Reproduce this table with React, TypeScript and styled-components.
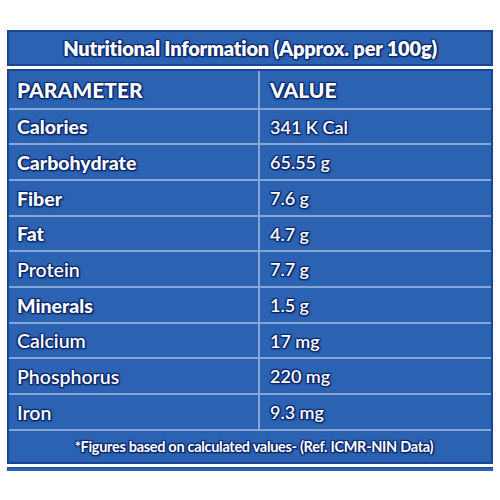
import React from "react";
import styled, { createGlobalStyle } from "styled-components";

const Global = createGlobalStyle`
  html, body { margin: 0; padding: 0; background: #ffffff; }
  body { width: 500px; height: 500px; overflow: hidden; }
`;

const BLUE = "#2b62b1";
const DARK = "#1a4597";
const LINE = "#86a6d6";
const SHADOW =
  "1px 1px 1px #0a266a, -1px -1px 1px #0a266a, 1px -1px 1px #0a266a, -1px 1px 1px #0a266a, 1px 1px 2px #0a266a";

const Page = styled.div`
  padding: 30px 7px 0 7px;
  width: 486px;
  display: flex;
  flex-direction: column;
`;

const Title = styled.div`
  height: 32px;
  border: 2px solid ${DARK};
  background: ${BLUE};
  display: flex;
  align-items: center;
  justify-content: center;
  color: #fff;
  font-family: "Lato", sans-serif;
  font-weight: 800;
  font-size: 20px;
  letter-spacing: -0.2px;
  text-shadow: ${SHADOW};
`;

const Table = styled.div`
  margin-top: 3px;
  border: 2px solid ${DARK};
  background: ${BLUE};
  display: flex;
  flex-direction: column;
`;

const Row = styled.div<{ $h: number }>`
  height: ${(p) => p.$h - 2}px;
  border-bottom: 2px solid ${LINE};
  display: grid;
  grid-template-columns: 251px 1fr;
`;

const Cell = styled.div<{ $bold?: boolean; $first?: boolean; $head?: boolean }>`
  display: flex;
  align-items: center;
  padding-left: ${(p) => (p.$first ? 8 : 10)}px;
  border-right: ${(p) => (p.$first ? `2px solid ${LINE}` : "none")};
  color: #fff;
  font-family: "Lato", sans-serif;
  font-weight: ${(p) => (p.$bold ? 900 : 600)};
  font-size: ${(p) => (p.$head ? 21 : p.$first ? 19.5 : 18)}px;
  text-shadow: ${SHADOW};
`;

const Footer = styled.div`
  height: 31px;
  display: flex;
  align-items: center;
  justify-content: center;
  padding-left: 8px;
  color: #fff;
  font-family: "Lato", sans-serif;
  font-size: 14.5px;
  font-weight: 700;
  letter-spacing: -0.3px;
  text-shadow: ${SHADOW};
`;

const BottomRule = styled.div`
  margin-top: 3px;
  height: 3px;
  background: ${BLUE};
  border-top: 1px solid ${DARK};
`;

const rows: { p: string; v: string; bold: boolean; h: number }[] = [
  { p: "Calories", v: "341 K Cal", bold: true, h: 35 },
  { p: "Carbohydrate", v: "65.55 g", bold: true, h: 36 },
  { p: "Fiber", v: "7.6 g", bold: true, h: 36 },
  { p: "Fat", v: "4.7 g", bold: true, h: 35 },
  { p: "Protein", v: "7.7 g", bold: false, h: 36 },
  { p: "Minerals", v: "1.5 g", bold: true, h: 36 },
  { p: "Calcium", v: "17 mg", bold: false, h: 35 },
  { p: "Phosphorus", v: "220 mg", bold: false, h: 36 },
  { p: "Iron", v: "9.3 mg", bold: false, h: 36 },
];

export default function App() {
  return (
    <>
      <Global />
      <Page>
        <Title>Nutritional Information (Approx. per 100g)</Title>
        <Table>
          <Row $h={39}>
            <Cell $first $bold $head>PARAMETER</Cell>
            <Cell $bold $head>VALUE</Cell>
          </Row>
          {rows.map((r) => (
            <Row key={r.p} $h={r.h}>
              <Cell $first $bold={r.bold}>{r.p}</Cell>
              <Cell>{r.v}</Cell>
            </Row>
          ))}
          <Footer>*Figures based on calculated values- (Ref. ICMR-NIN Data)</Footer>
        </Table>
        <BottomRule />
      </Page>
    </>
  );
}
